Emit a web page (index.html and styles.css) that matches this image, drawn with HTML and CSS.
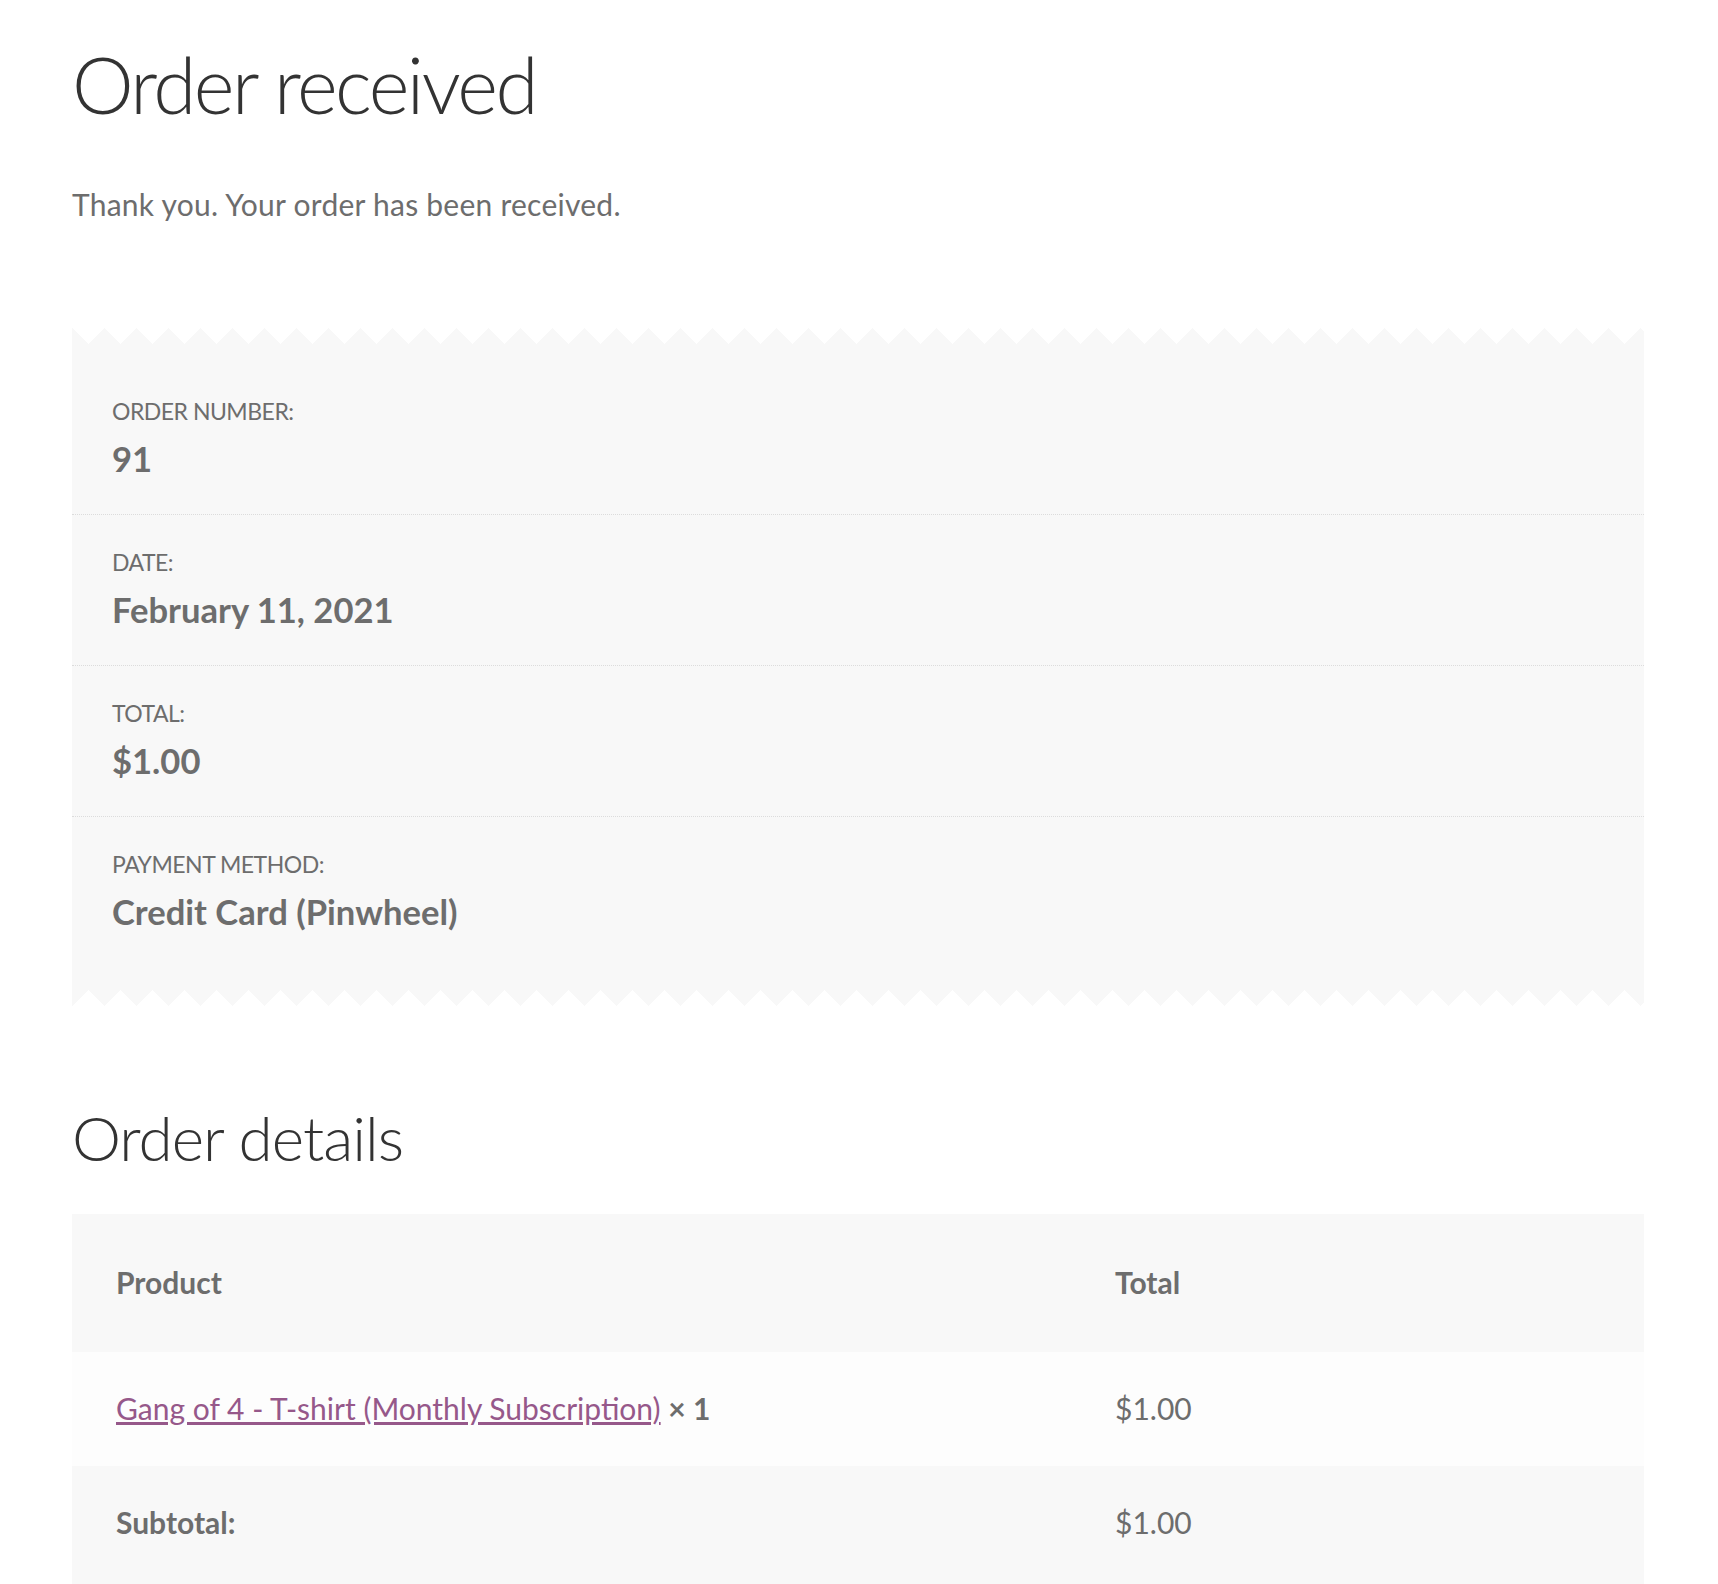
FILE: index.html
```html
<!DOCTYPE html>
<html lang="en">
<head>
<meta charset="utf-8">
<title>Order received</title>
<link rel="stylesheet" href="styles.css">
</head>
<body>
<main class="page">
  <h1 class="page-title">Order received</h1>
  <p class="notice">Thank you. Your order has been received.</p>

  <ul class="order-overview">
    <li class="overview-item">ORDER NUMBER:<strong class="overview-value">91</strong></li>
    <li class="overview-item">DATE:<strong class="overview-value">February 11, 2021</strong></li>
    <li class="overview-item">TOTAL:<strong class="overview-value">$1.00</strong></li>
    <li class="overview-item">PAYMENT METHOD:<strong class="overview-value">Credit Card (Pinwheel)</strong></li>
  </ul>

  <section class="order-details">
    <h2 class="section-title">Order details</h2>
    <table class="details-table">
      <colgroup>
        <col class="col-product">
        <col class="col-total">
      </colgroup>
      <thead>
        <tr><th>Product</th><th>Total</th></tr>
      </thead>
      <tbody>
        <tr>
          <td><a class="product-link" href="#">Gang of 4 - T-shirt (Monthly Subscription)</a> <strong class="qty">×&nbsp;1</strong></td>
          <td>$1.00</td>
        </tr>
      </tbody>
      <tfoot>
        <tr class="last-row"><th>Subtotal:</th><td>$1.00</td></tr>
      </tfoot>
    </table>
  </section>
</main>
</body>
</html>
```
FILE: styles.css
```css
* {
  box-sizing: border-box;
}

body {
  margin: 0;
  background: #ffffff;
  color: #6d6d6d;
  font-family: Lato, "Open Sans", "DejaVu Sans", sans-serif;
  font-size: 30px;
}

.page {
  width: 1572px;
  margin-left: 72px;
  padding-top: 37px;
}

.page-title {
  margin: 0 0 49px;
  font-size: 78px;
  font-weight: 300;
  line-height: 94px;
  color: #333333;
  letter-spacing: -2.5px;
}

.notice {
  margin: 0;
  line-height: 48px;
  letter-spacing: 0.25px;
}

/* receipt-like overview box */
.order-overview {
  position: relative;
  list-style: none;
  margin: 116px 0 0;
  padding: 20px 0 23px;
  background: #f8f8f8;
}

.order-overview::before,
.order-overview::after {
  content: "";
  position: absolute;
  left: 0;
  width: 100%;
  height: 16px;
  background-repeat: repeat-x;
  background-size: 32px 32px;
}

.order-overview::before {
  top: -16px;
  background-image:
    linear-gradient(45deg, #f8f8f8 25%, transparent 25%),
    linear-gradient(315deg, #f8f8f8 25%, transparent 25%);
  background-position: 0 -16px, 0 -16px;
}

.order-overview::after {
  bottom: -16px;
  background-image:
    linear-gradient(135deg, #f8f8f8 25%, transparent 25%),
    linear-gradient(225deg, #f8f8f8 25%, transparent 25%);
  background-position: 0 0, 0 0;
}

.overview-item {
  padding: 26px 40px 28px;
  border-bottom: 1px dotted #dcdcdc;
  font-size: 23px;
  line-height: 42px;
  letter-spacing: -0.5px;
}

.overview-item:last-child {
  border-bottom: 0;
}

.overview-value {
  display: block;
  font-size: 34.6px;
  line-height: 54px;
  font-weight: 700;
  letter-spacing: 0;
}

/* order details */
.section-title {
  margin: 110px 0 40px;
  font-size: 62px;
  font-weight: 300;
  line-height: 74px;
  color: #333333;
  letter-spacing: -1px;
}

.details-table {
  width: 100%;
  border-collapse: collapse;
  border-spacing: 0;
  font-size: 30px;
}

.col-product {
  width: 999px;
}

.details-table th,
.details-table td {
  text-align: left;
  vertical-align: top;
  line-height: 49px;
  padding: 32px 44px 33px;
}

.details-table thead th {
  padding: 44px 44px 45px;
  background: #f8f8f8;
  font-weight: 700;
}

.details-table tbody td {
  background: #fdfdfd;
}

.details-table tfoot th,
.details-table tfoot td {
  background: #f8f8f8;
}

.details-table tfoot th {
  font-weight: 700;
}

.details-table .last-row th,
.details-table .last-row td {
  padding-bottom: 37px;
}

.product-link {
  color: #96588a;
  text-decoration: underline;
}

.qty {
  font-weight: 700;
}
```
